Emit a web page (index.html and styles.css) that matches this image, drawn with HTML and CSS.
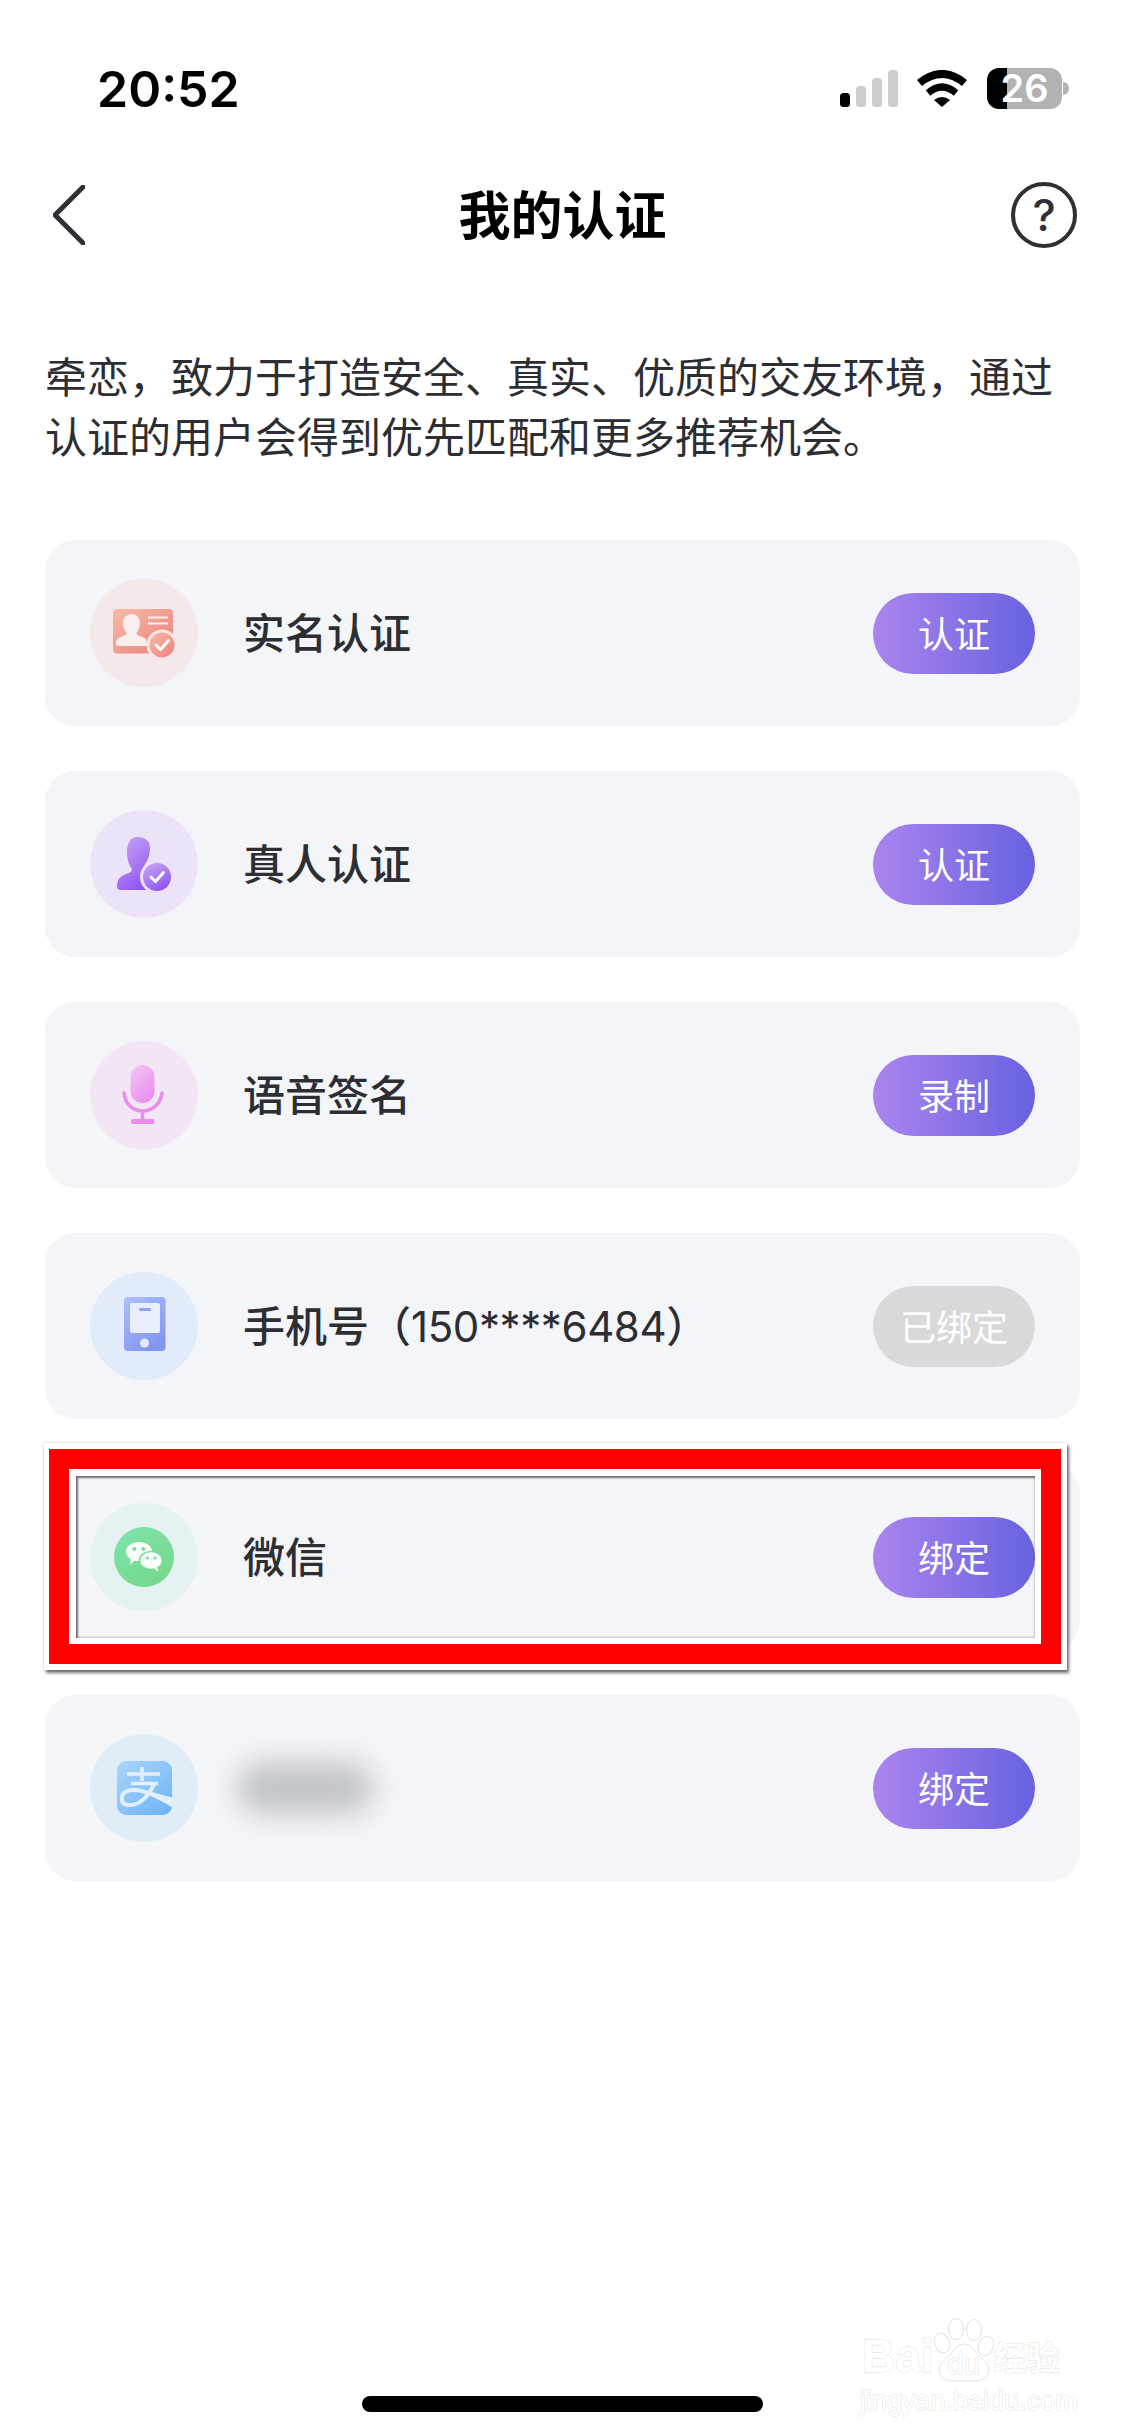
FILE: index.html
```html
<!DOCTYPE html>
<html lang="zh-CN">
<head>
<meta charset="utf-8">
<title>我的认证</title>
<link rel="stylesheet" href="styles.css">
</head>
<body>
<div class="page">
  <header class="status">
    <span class="time">20:52</span>
    <div class="status-icons">
      <svg class="signal" width="58" height="37" viewBox="0 0 58 37">
        <rect x="0" y="23" width="10" height="14" rx="3.5" fill="#000"/>
        <rect x="16" y="16" width="10" height="21" rx="3.5" fill="#ccc"/>
        <rect x="32" y="8" width="10" height="29" rx="3.5" fill="#ccc"/>
        <rect x="48" y="0" width="10" height="37" rx="3.5" fill="#ccc"/>
      </svg>
      <svg class="wifi" width="50" height="37" viewBox="0 0 50 37">
        <path d="M2.5 13Q25 -5 47.5 13" fill="none" stroke="#000" stroke-width="8"/>
        <path d="M11 23Q25 11 39 23" fill="none" stroke="#000" stroke-width="7"/>
        <path d="M17 30Q25 24 33 30L25 37Z" fill="#000"/>
      </svg>
      <div class="battery"><span>26</span></div>
    </div>
  </header>

  <nav class="nav">
    <svg class="back" width="32" height="60" viewBox="0 0 32 60">
      <path d="M30 2L2 30L30 58" fill="none" stroke="#2f3036" stroke-width="5" stroke-linecap="round" stroke-linejoin="round"/>
    </svg>
    <h1 class="title">我的认证</h1>
    <span class="help">?</span>
  </nav>

  <p class="intro">牵恋，致力于打造安全、真实、优质的交友环境，通过<br>认证的用户会得到优先匹配和更多推荐机会。</p>

  <ul class="list">
    <li class="row">
      <svg class="icon" width="108" height="108" viewBox="0 0 108 108">
        <defs>
          <linearGradient id="g1" x1="0" y1="0" x2="1" y2="1"><stop offset="0" stop-color="#f6bca3"/><stop offset="1" stop-color="#ee7f7f"/></linearGradient>
        </defs>
        <circle cx="54" cy="54" r="54" fill="#f3e8ea"/>
        <rect x="23" y="30" width="60" height="44.500" rx="4" fill="url(#g1)"/>
        <path d="M41.500 35c5.500 0 8.500 4 8.500 9.500 0 4-1.500 7-3.500 9 0 2.500 3 3.500 6 4.500 3 1 4.500 3 4.500 6.500 0 1.500-.5 2.500-2 2.500h-27c-1.500 0-2-1-2-2.500 0-3.500 1.500-5.500 4.500-6.500 3-1 6-2 6-4.500-2-2-3.500-5-3.500-9C33 39 36 35 41.500 35z" fill="#fbeeee"/>
        <path d="M58 38.500h20M58 44.500h20" stroke="#fbeeee" stroke-width="2"/>
        <circle cx="72" cy="66" r="15.500" fill="#f6e6e6"/>
        <circle cx="72" cy="66" r="12.500" fill="url(#g1)"/>
        <path d="M66 66l4.500 4.500L78.500 61.500" fill="none" stroke="#fff" stroke-width="3" stroke-linecap="round" stroke-linejoin="round"/>
      </svg>
      <span class="label">实名认证</span>
      <span class="btn">认证</span>
    </li>
    <li class="row">
      <svg class="icon" width="108" height="108" viewBox="0 0 108 108">
        <defs>
          <linearGradient id="g2" x1="0.2" y1="0" x2="0.8" y2="1"><stop offset="0" stop-color="#c6a4f6"/><stop offset="1" stop-color="#8b4ef0"/></linearGradient>
        </defs>
        <circle cx="54" cy="54" r="54" fill="#ece3f9"/>
        <path d="M47 27c7 0 13 3 13 11 0 7-2 12-5 16-1 3 1 5 4 6 3 1 5 3 5 8v12H31c-3 0-4-1-4-4 0-6 3-10 9-12 3-1 6-2 6-5-3-4-5-9-5-17 0-9 4-15 10-15z" fill="url(#g2)"/>
        <circle cx="67" cy="67" r="17" fill="#ece3f9"/>
        <circle cx="67" cy="67" r="14" fill="url(#g2)"/>
        <path d="M61 67l4.500 4.500L73.500 62.500" fill="none" stroke="#fff" stroke-width="3" stroke-linecap="round" stroke-linejoin="round"/>
      </svg>
      <span class="label">真人认证</span>
      <span class="btn">认证</span>
    </li>
    <li class="row">
      <svg class="icon" width="108" height="108" viewBox="0 0 108 108">
        <defs>
          <linearGradient id="g3" x1="0.2" y1="0" x2="0.8" y2="1"><stop offset="0" stop-color="#f3c2f5"/><stop offset="1" stop-color="#e98af0"/></linearGradient>
        </defs>
        <circle cx="54" cy="54" r="54" fill="#f3e6f4"/>
        <rect x="40.500" y="24" width="24" height="38" rx="12" fill="url(#g3)"/>
        <path d="M34 52c1 11 9 18 18.500 18S71 63 72 52" fill="none" stroke="#e98bf0" stroke-width="3.500" stroke-linecap="round"/>
        <path d="M52.500 70v10" stroke="#e98bf0" stroke-width="3.500"/>
        <rect x="41" y="78" width="23.500" height="5" rx="2" fill="#e98bf0"/>
      </svg>
      <span class="label">语音签名</span>
      <span class="btn">录制</span>
    </li>
    <li class="row">
      <svg class="icon" width="108" height="108" viewBox="0 0 108 108">
        <defs>
          <linearGradient id="g4" x1="0.2" y1="0" x2="0.8" y2="1"><stop offset="0" stop-color="#a9bbf9"/><stop offset="1" stop-color="#7f93f0"/></linearGradient>
        </defs>
        <circle cx="54" cy="54" r="54" fill="#e2ebf9"/>
        <rect x="34" y="25" width="41.500" height="54" rx="4" fill="url(#g4)"/>
        <rect x="40" y="31" width="30" height="30" rx="2" fill="#e9eefc"/>
        <rect x="49" y="36" width="12" height="3" rx="1.500" fill="#8fa3f4"/>
        <circle cx="54.500" cy="71" r="4.500" fill="#e4eafb"/>
      </svg>
      <span class="label">手机号（<span class="digits">150****6484</span>）</span>
      <span class="btn btn-done">已绑定</span>
    </li>
    <li class="row row-marked">
      <svg class="icon" width="108" height="108" viewBox="0 0 108 108">
        <defs>
          <linearGradient id="g5" x1="0.2" y1="0" x2="0.8" y2="1"><stop offset="0" stop-color="#7fe2aa"/><stop offset="1" stop-color="#75d98a"/></linearGradient>
        </defs>
        <circle cx="54" cy="54" r="54" fill="#e6f1f2"/>
        <circle cx="54" cy="54" r="30" fill="url(#g5)"/>
        <path d="M49 39c7.200 0 13 4.300 13 9.500 0 5.200-5.800 9.500-13 9.500-1.500 0-3-.2-4.300-.6L40 62l.8-5.500C38 54.500 36 51.700 36 48.500 36 43.300 41.800 39 49 39z" fill="#fafefb"/>
        <ellipse cx="61" cy="57.500" rx="11.500" ry="9" fill="#fafefb" stroke="#78dc95" stroke-width="1.500"/>
        <path d="M64 65.500l4 3-.6-4.500z" fill="#fafefb"/>
        <circle cx="44.300" cy="46" r="2" fill="#78dc95"/>
        <circle cx="53.300" cy="46" r="2" fill="#78dc95"/>
        <circle cx="57.300" cy="55" r="1.500" fill="#78dc95"/>
        <circle cx="65" cy="55" r="1.500" fill="#78dc95"/>
      </svg>
      <span class="label">微信</span>
      <span class="btn">绑定</span>
      <div class="mark"><div class="mark-red"><div class="mark-inner"></div></div></div>
    </li>
    <li class="row">
      <svg class="icon" width="108" height="108" viewBox="0 0 108 108">
        <defs>
          <linearGradient id="g6" x1="0.1" y1="0" x2="0.9" y2="1"><stop offset="0" stop-color="#a9d3fa"/><stop offset="1" stop-color="#6db5f7"/></linearGradient>
          <clipPath id="aliclip"><rect x="27" y="27" width="55" height="54" rx="9"/></clipPath>
        </defs>
        <circle cx="54" cy="54" r="54" fill="#e0edf6"/>
        <rect x="27" y="27" width="55" height="54" rx="9" fill="url(#g6)"/>
        <g clip-path="url(#aliclip)">
          <path d="M52 33v14M37 40h33M41 49.500h27" fill="none" stroke="#e3f0fb" stroke-width="3.600"/>
          <path d="M64 50C60 60 50 72 39 71C33 71 31 67 32 63C33 58 38 56 44 56C56 56 70 64 84 72" fill="none" stroke="#e3f0fb" stroke-width="4"/>
          <path d="M58 57L84 64V74Z" fill="#e3f0fb"/>
        </g>
      </svg>
      <span class="smudge"></span>
      <span class="btn">绑定</span>
    </li>
  </ul>

  <div class="home"></div>

  <div class="watermark">
    <div class="wm-top">
      <span class="wm-bai">Bai</span>
      <div class="wm-paw">
        <svg width="60" height="64" viewBox="0 0 60 64">
          <g fill="#fff" stroke="#e2e2e2" stroke-width="1">
            <ellipse cx="8" cy="25" rx="7.500" ry="10" transform="rotate(-20 8 25)"/>
            <ellipse cx="22" cy="11" rx="7.500" ry="10.500"/>
            <ellipse cx="40" cy="12" rx="7.500" ry="10.500"/>
            <ellipse cx="52" cy="28" rx="7.500" ry="10" transform="rotate(20 52 28)"/>
            <path d="M30 26c8 0 11 9 17 14 5 4 8 7 8 12 0 7-7 11-13 11H18C11 63 5 59 5 52c0-5 3-8 8-12 6-5 9-14 17-14z"/>
          </g>
        </svg>
        <span class="wm-du">du</span>
      </div>
      <span class="wm-cn">经验</span>
    </div>
    <div class="wm-url">jingyan.baidu.com</div>
  </div>
</div>
</body>
</html>
```

FILE: styles.css
```css
* { box-sizing: border-box; }
html, body { margin: 0; padding: 0; background: #fff; }
body { font-family: Inter, "Noto Sans CJK SC", sans-serif; color: #2c2e33; }
.page { position: relative; width: 1125px; height: 2436px; overflow: hidden; display: flex; flex-direction: column; background: #fff; }

.status { height: 176px; flex: none; display: flex; align-items: center; justify-content: space-between; padding: 2px 56px 0 97px; }
.time { font-size: 50px; font-weight: 600; color: #000; line-height: 1; }
.status-icons { display: flex; align-items: center; margin-top: -2px; }
.signal { display: block; margin-right: 19px; }
.wifi { display: block; margin-right: 20px; }
.battery { position: relative; width: 75px; height: 41px; border-radius: 12px; background: linear-gradient(90deg, #000 20px, #b2b2b2 20px); display: flex; align-items: center; justify-content: center; margin-right: 7px; }
.battery span { color: #fff; font-size: 38px; font-weight: 600; line-height: 1; }
.battery::after { content: ""; position: absolute; left: 76px; top: 14px; width: 6px; height: 13px; background: #b2b2b2; border-radius: 0 6px 6px 0; }

.nav { height: 78px; flex: none; display: grid; grid-template-columns: 1fr auto 1fr; align-items: center; padding: 0 48px; }
.back { display: block; margin-left: 5px; }
.title { margin: 0; padding-bottom: 5px; font-size: 52px; font-weight: 700; color: #000; line-height: 1; font-family: "Noto Sans CJK SC", sans-serif; }
.help { justify-self: end; width: 66px; height: 66px; border: 4.500px solid #2f3036; border-radius: 50%; display: flex; align-items: center; justify-content: center; font-size: 44px; font-weight: 500; line-height: 1; color: #2f3036; }

.intro { margin: 91px 45px 75px; font-size: 42px; line-height: 60px; color: #2c2e33; white-space: nowrap; flex: none; font-family: "Noto Sans CJK SC", sans-serif; }

.list { list-style: none; margin: 0 45px; padding: 0; display: flex; flex-direction: column; gap: 45px; flex: none; }
.row { position: relative; height: 186px; border-radius: 30px; background: #f4f5f9; display: flex; align-items: center; padding: 0 45px; }
.icon { display: block; flex: none; margin-right: 45px; }
.label { font-size: 42px; font-weight: 500; color: #2c2e33; white-space: nowrap; padding-bottom: 5px; }
.digits { font-weight: 400; letter-spacing: -0.400px; }
.btn { margin-left: auto; width: 162px; height: 81px; border-radius: 41px; padding-bottom: 2px; background: linear-gradient(90deg, #ab84ee, #6762e0); color: #fff; font-size: 36px; display: flex; align-items: center; justify-content: center; flex: none; font-family: "Noto Sans CJK SC", sans-serif; }
.btn-done { background: #d9d9d9; color: #fff; }
.smudge { width: 136px; height: 52px; margin-left: -6px; background: #c2c4ca; border-radius: 24px; filter: blur(14px); }

.mark { position: absolute; left: -1px; top: -21px; width: 1023px; height: 227px; border-style: solid; border-color: #fff; border-width: 6px 6px 6px 5px; box-shadow: 2px 3px 3px rgba(0,0,0,.55), 0 0 2px rgba(0,0,0,.25); }
.mark-red { width: 100%; height: 100%; border: 20px solid #f00; }
.mark-inner { width: 100%; height: 100%; border-style: solid; border-color: #fff; border-width: 7px 6px 6px 7px; box-shadow: inset 2px 2px 2px rgba(0,0,0,.55), inset -1px -1px 2px rgba(0,0,0,.2); }

.home { width: 401px; height: 16px; border-radius: 8px; background: #000; margin: auto auto 24px; flex: none; }

.watermark { position: absolute; left: 860px; top: 2316px; width: 210px; color: #fff; }
.wm-top { display: flex; align-items: flex-end; height: 66px; }
.wm-bai, .wm-du, .wm-cn, .wm-url { -webkit-text-stroke: 1px #dfdfdf; paint-order: stroke fill; font-family: "Liberation Sans", "Noto Sans CJK SC", sans-serif; }
.wm-bai { font-size: 46px; line-height: 52px; font-weight: 700; margin-left: 2px; }
.wm-paw { position: relative; width: 60px; height: 64px; flex: none; }
.wm-paw svg { display: block; }
.wm-du { position: absolute; left: 14px; bottom: 2px; font-size: 29px; line-height: 32px; }
.wm-cn { font-size: 33px; line-height: 46px; font-weight: 700; }
.wm-url { font-size: 27px; line-height: 30px; margin-top: 4px; white-space: nowrap; }
```
